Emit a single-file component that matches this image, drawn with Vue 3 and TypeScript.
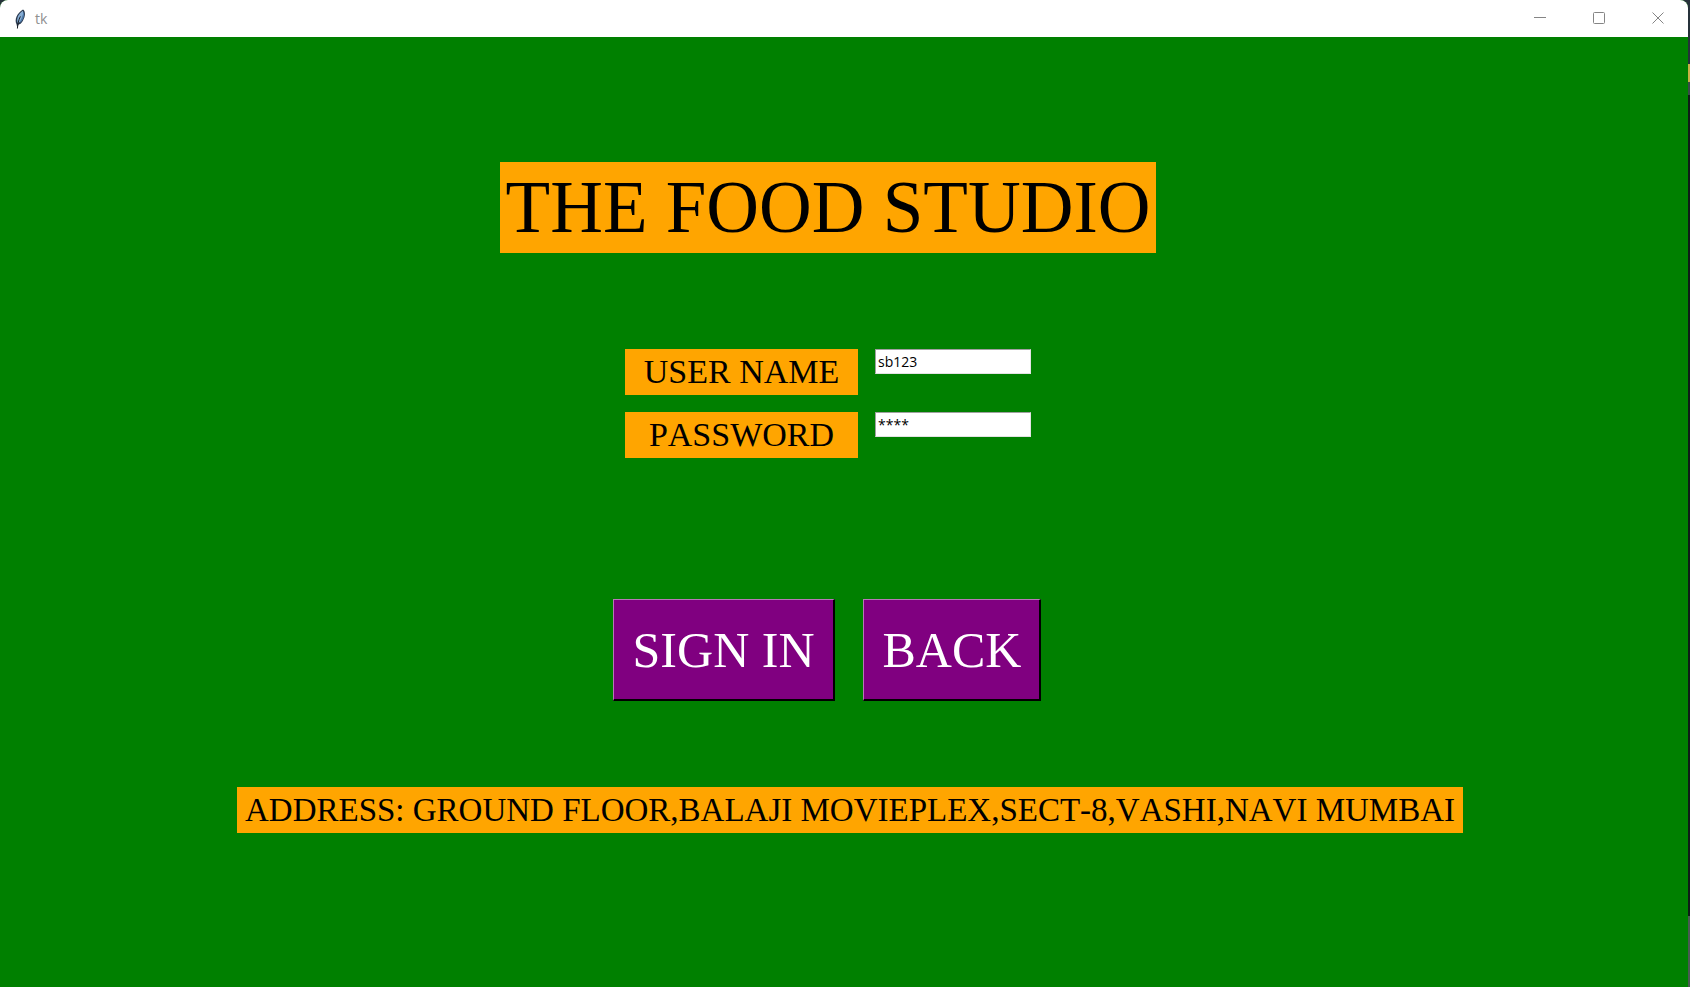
<script setup lang="ts">
import { ref } from 'vue'

const username = ref('sb123')
const passwordMask = ref('****')
</script>

<template>
  <div class="desktop">
    <div class="window">
      <header class="titlebar">
        <svg class="feather" viewBox="0 0 14 20" aria-hidden="true">
          <path d="M4.4 19.5 L3.6 15.5 C1 11 4 4 10 .6 C13 2.5 12.4 8 9.8 12 C8.4 14.4 6.8 15.4 5.4 15.8 Z" fill="#2b3a50" />
          <path d="M4.6 14 C3 9.6 5.6 4.6 9.8 1.8 C10.8 5 9.6 10 7 13 Z" fill="#86add4" />
          <path d="M6.8 13 C8.9 9.6 10.1 6.2 10.3 2.6 C12.2 6 10.4 10.6 7.6 13.4 Z" fill="#4f7bab" />
          <path d="M7.4 7.4 C5.4 11 4.8 15 4.4 19.5" fill="none" stroke="#1b2028" stroke-width="1" />
        </svg>
        <span class="caption">tk</span>
        <div class="controls">
          <button type="button" aria-label="Minimize">
            <svg viewBox="0 0 12 12"><path d="M0 5.5H12" /></svg>
          </button>
          <button type="button" aria-label="Maximize">
            <svg viewBox="0 0 12 12"><rect x=".5" y=".5" width="11" height="11" rx="1" /></svg>
          </button>
          <button type="button" aria-label="Close">
            <svg viewBox="0 0 12 12"><path d="M.5 .5L11.5 11.5M11.5 .5L.5 11.5" /></svg>
          </button>
        </div>
      </header>
      <main class="content">
        <form class="login" @submit.prevent>
          <h1>THE FOOD STUDIO</h1>
          <div class="fields">
            <label for="username">USER NAME</label>
            <input id="username" v-model="username" type="text" autocomplete="off" />
            <label for="password">PASSWORD</label>
            <input id="password" v-model="passwordMask" type="text" autocomplete="off" />
          </div>
          <div class="actions">
            <button type="submit">SIGN IN</button>
            <button type="button">BACK</button>
          </div>
        </form>
        <p class="address">ADDRESS: GROUND FLOOR,BALAJI MOVIEPLEX,SECT-8,VASHI,NAVI MUMBAI</p>
      </main>
    </div>
  </div>
</template>

<style>
body {
  margin: 0;
}
</style>

<style scoped>
.desktop {
  min-height: 100vh;
  display: flex;
  box-sizing: border-box;
  padding-right: 2px;
  background: linear-gradient(#26313a 0 64px, #c9b045 64px 82px, #3a4a4a 82px 95px, #101c18 95px 916px, #4a5a52 916px);
}
.window {
  flex: 1;
  display: flex;
  flex-direction: column;
  overflow: hidden;
  border-radius: 8px 8px 0 0;
  background: #008000;
}
.titlebar {
  height: 37px;
  display: flex;
  align-items: center;
  padding-left: 13px;
  background: #fff;
}
.feather {
  width: 14px;
  height: 20px;
}
.caption {
  margin-left: 8px;
  font: 14px/20px "Open Sans", sans-serif;
  color: #909090;
}
.controls {
  display: flex;
  align-self: stretch;
  margin-left: auto;
  padding: 0 1px 1px 0;
}
.controls button {
  width: 59px;
  display: grid;
  place-items: center;
  padding: 0;
  border: 0;
  background: none;
}
.controls svg {
  width: 12px;
  height: 12px;
  fill: none;
  stroke: #858585;
  stroke-width: 1;
}
.content {
  flex: 1;
  display: flex;
  flex-direction: column;
  align-items: center;
  padding-top: 125px;
  font-family: "Liberation Serif", "Times New Roman", serif;
  font-kerning: none;
}
.login {
  display: flex;
  flex-direction: column;
  align-items: center;
  margin-right: 32px;
}
h1 {
  margin: 0;
  padding: 0 6px;
  background: #ffa500;
  color: #000;
  font-size: 73px;
  line-height: 91px;
  font-weight: 400;
  white-space: nowrap;
}
.fields {
  display: grid;
  grid-template-columns: 233px 156px;
  column-gap: 17px;
  row-gap: 17px;
  align-items: start;
  margin-top: 96px;
}
.fields label {
  background: #ffa500;
  color: #000;
  font-size: 34px;
  line-height: 46px;
  text-align: center;
}
.fields input {
  box-sizing: border-box;
  width: 100%;
  height: 25px;
  margin: 0;
  padding: 0 2px;
  border: 1px solid #e3e3e3;
  border-top-color: #a0a0a0;
  border-left-color: #a0a0a0;
  border-radius: 0;
  background: #fff;
  color: #000;
  font: 14px/20px "Open Sans", sans-serif;
  outline: none;
}
.actions {
  display: flex;
  gap: 28px;
  margin-top: 141px;
  padding-right: 2px;
}
.actions button {
  height: 102px;
  padding: 0 18px 0 19px;
  border: solid #000;
  border-width: 1px 2px 2px 1px;
  border-top-color: #b878b8;
  border-left-color: #b878b8;
  border-radius: 0;
  background: #800080;
  color: #fff;
  font-family: inherit;
  font-size: 50px;
  font-kerning: none;
  white-space: nowrap;
}
.address {
  margin: 86px 0 0 12px;
  padding: 0 8px;
  background: #ffa500;
  color: #000;
  font-size: 33px;
  line-height: 46px;
  white-space: nowrap;
}
</style>
